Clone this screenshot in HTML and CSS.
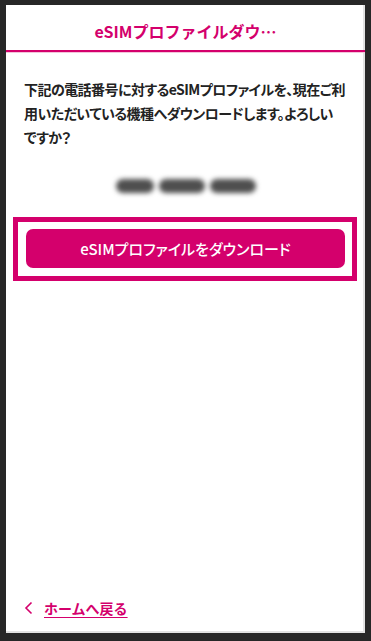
FILE: index.html
```html
<!DOCTYPE html>
<html lang="ja">
<head>
<meta charset="utf-8">
<title>eSIMプロファイルダウンロード</title>
<link rel="stylesheet" href="styles.css">
</head>
<body>
<div class="screen">
  <header class="header">
    <h1 class="title">eSIMプロファイルダウ…</h1>
  </header>
  <main class="content">
    <p class="message">下記の電話番号に対するeSIMプロファイルを、現在ご利<br>用いただいている機種へダウンロードします。よろしい<br>ですか？</p>
    <div class="phone" aria-label="電話番号（非表示）">
      <span class="seg seg-a"></span><span class="seg seg-b"></span><span class="seg seg-c"></span>
    </div>
    <div class="focus-frame">
      <button class="btn" type="button">eSIMプロファイルをダウンロード</button>
    </div>
  </main>
  <footer class="footer">
    <a class="back" href="#"><span class="chev"><svg width="9" height="14" viewBox="0 0 9 14"><path d="M7.5 1.5 L2 7 L7.5 12.5" fill="none" stroke="#d4006c" stroke-width="1.6"/></svg></span><span class="back-text">ホームへ戻る</span></a>
  </footer>
</div>
</body>
</html>
```

FILE: styles.css
```css
* { box-sizing: border-box; }
html, body { margin: 0; padding: 0; }
body {
  width: 371px;
  height: 641px;
  background: #272727;
  padding: 5px 6px 8px 6px;
  font-family: "Noto Sans CJK JP", "Noto Sans", sans-serif;
}
.screen {
  background: #fff;
  height: 628px;
  display: flex;
  flex-direction: column;
  box-shadow: inset -2px -2px 0 #e2e2e2;
}
.header {
  padding: 14px 0 7px;
  border-bottom: 2px solid #d4006c;
  box-shadow: 0 1px 0 #f3c4da;
  text-align: center;
}
.title {
  margin: 0;
  font-size: 16px;
  line-height: 24px;
  font-weight: 700;
  color: #d4006c;
}
.content {
  padding: 25px 0 0;
}
.message {
  margin: 0 18px;
  font-size: 14px;
  line-height: 24px;
  font-weight: 700;
  color: #222;
  letter-spacing: -0.55px;
  font-feature-settings: "palt";
  white-space: nowrap;
}
.phone {
  display: flex;
  justify-content: center;
  gap: 5px;
  margin-top: 30px;
  height: 14px;
  filter: blur(2.5px);
}
.seg {
  display: block;
  height: 14px;
  background: #4f4f4f;
  border-radius: 7px;
}
.seg-a { width: 38px; }
.seg-b { width: 46px; }
.seg-c { width: 46px; }
.focus-frame {
  margin: 24px 8px 0 7px;
  border: 5px solid #d4006c;
  padding: 7px 7px 8px 8px;
}
.btn {
  display: block;
  width: 100%;
  height: 39px;
  border: 0;
  border-radius: 7px;
  background: #d4006c;
  color: #fff;
  font-family: inherit;
  font-size: 15px;
  font-weight: 500;
  font-feature-settings: "palt";
  padding: 0;
}
.footer {
  margin-top: auto;
  padding: 0 18px 13px;
}
.back {
  display: inline-flex;
  align-items: center;
  gap: 11px;
  color: #d4006c;
  text-decoration: none;
  font-size: 14px;
  line-height: 24px;
  font-weight: 700;
}
.chev { display: flex; }
.back-text {
  text-decoration: underline;
  text-underline-offset: 3px;
}
```
